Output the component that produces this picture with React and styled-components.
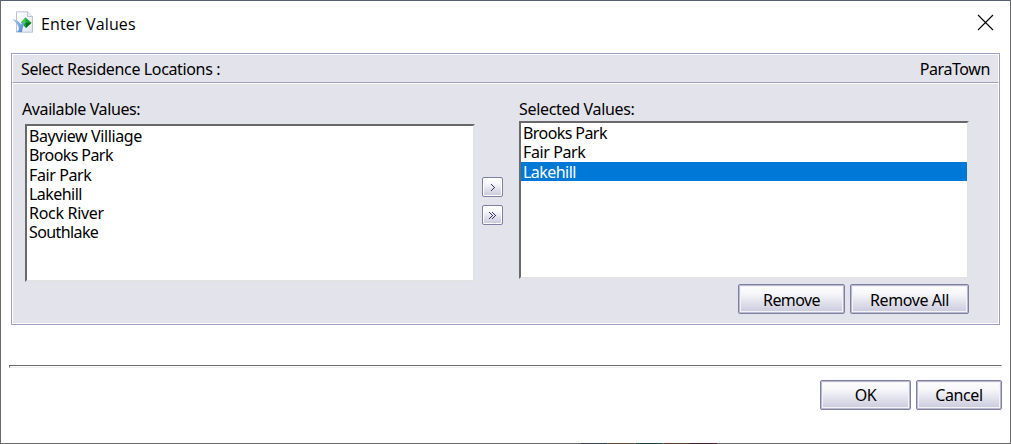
import React, { useState } from 'react';
import styled, { createGlobalStyle } from 'styled-components';

const Global = createGlobalStyle`
  * { box-sizing: border-box; }
  body { margin: 0; background: #fff; }
  button { margin: 0; padding: 0; }
`;

const Dialog = styled.div`
  width: 1011px;
  height: 444px;
  display: flex;
  flex-direction: column;
  border: 1px solid #696969;
  border-top-color: #596170;
  border-bottom: 0;
  background: #fff;
  color: #000;
  font: 16px/19px 'Noto Sans', sans-serif;
  overflow: hidden;
`;

const TitleBar = styled.header`
  height: 52px;
  flex: none;
  display: flex;
  align-items: flex-start;
  padding: 10px 16px 0 11px;
`;

const Title = styled.h1`
  flex: 1;
  margin: 2px 0 0 8px;
  font: 400 16px/22px 'Open Sans', sans-serif;
  letter-spacing: 0.15px;
`;

const CloseButton = styled.button`
  width: 17px;
  height: 17px;
  margin-top: 3px;
  border: 0;
  background: none;
  display: flex;
`;

const Label = styled.span`
  display: block;
  white-space: nowrap;
  letter-spacing: ${(p) => p.$track ?? -0.4}px;
`;

const Panel = styled.section`
  width: 989px;
  height: 272px;
  flex: none;
  margin-left: 10px;
  display: flex;
  flex-direction: column;
  border: 1px solid #9f9fbf;
  background: #e3e3eb;
`;

const PanelHeader = styled.div`
  height: 29px;
  flex: none;
  display: flex;
  justify-content: space-between;
  padding: 5px 8px 0 8px;
  border: 1px solid #fff;
  border-bottom: 1px solid #9f9fbf;
`;

const PanelBody = styled.div`
  flex: 1;
  display: flex;
  align-items: flex-start;
  border: 1px solid #fff;
`;

const Column = styled.div`
  width: ${(p) => p.$indent ? 453 : 450}px;
  margin-left: ${(p) => p.$left}px;
  padding-top: 16px;

  > ul { margin-left: ${(p) => p.$indent || 0}px; }
`;

const ListBox = styled.ul`
  height: 158px;
  margin: ${(p) => p.$gap}px 0 0;
  padding: 0.6px 0 0;
  list-style: none;
  background: #fff;
  border: 2px solid #e3e3e3;
  border-top-color: #696969;
  border-left-color: #696969;
`;

const Item = styled.li`
  height: 19.2px;
  padding: 0.7px 0 0 2px;
  line-height: 19.2px;
  color: ${(p) => (p.$selected ? '#fff' : '#000')};
  background: ${(p) => (p.$selected ? '#0078d7' : 'transparent')};
`;

const MoveButtons = styled.div`
  display: flex;
  flex-direction: column;
  gap: 8px;
  margin: 93px 0 0 7px;
`;

const Button = styled.button`
  width: ${(p) => p.$w}px;
  height: ${(p) => p.$h || 30}px;
  display: flex;
  align-items: center;
  justify-content: center;
  padding-top: ${(p) => p.$drop || 0}px;
  border: 1px solid #7f7f9f;
  border-radius: 2px;
  background: linear-gradient(#fff 0%, #f7f7fa 30%, #c8c8dc 100%);
  box-shadow: ${(p) => (p.$h ? 'inset 0 0 0 1px #fff' : 'inset 0 0 0 1px #b9b9cf, inset 0 0 0 2px #f4f4f8')};
  color: #000;
  font: inherit;
`;

const Actions = styled.div`
  display: flex;
  justify-content: flex-end;
  gap: 5px;
  margin-top: ${(p) => p.$top || 0}px;
  padding-right: ${(p) => p.$right || 0}px;
`;

const Divider = styled.hr`
  width: 993px;
  height: 3px;
  flex: none;
  margin: 40px 0 0 8px;
  border: 1px solid #eee;
  border-top-color: #696969;
  border-left-color: #696969;
`;

const BottomEdge = styled.div`
  height: 1px;
  flex: none;
  margin-top: auto;
  background: linear-gradient(
    90deg,
    #696969 580px, #33404a 580px 606px, #696969 606px 607px, #6b4a34 607px 633px,
    #696969 633px 635px, #10453a 635px 661px, #696969 661px 663px, #5c3322 663px 689px,
    #4a2233 690px 716px, #696969 716px
  );
`;

const FileIcon = () => (
  <svg width="21" height="23" viewBox="0 0 21 23">
    <defs>
      <linearGradient id="page" x2="1" y2="1">
        <stop stopColor="#fff" />
        <stop offset="1" stopColor="#dfe6f2" />
      </linearGradient>
      <linearGradient id="sweep" x2="1" y2="1">
        <stop stopColor="#a9cdf5" />
        <stop offset="1" stopColor="#4a7fd4" />
      </linearGradient>
    </defs>
    <path d="M4.500.800H15.500l5 4.700v15.700h-16z" fill="url(#page)" stroke="#bcc4d0" />
    <path d="M15.500.800v4.700h5" fill="#eef1f6" stroke="#bcc4d0" />
    <path d="M13.500 6.500l6 5.200-5.600 5.300-5-5.400z" fill="#16a52c" />
    <path d="M13.500 6.500v5.400h-4.600z" fill="#3fd054" />
    <path d="M13.900 17l5.600-5.300h-5.600z" fill="#087019" />
    <path d="M0 8.500c4-.300 7 1.500 9 5 1.300-1.300 2.500-2 4.500-2.200-2 2.500-3 5.500-3.500 9.700H4.500c2-1 2.800-2.500 2.300-4.500C5.800 13 3.500 10.500 0 8.500z" fill="url(#sweep)" />
  </svg>
);

const CloseIcon = () => (
  <svg width="17" height="17" viewBox="0 0 17 17">
    <path d="M1 1l15 15M16 1L1 16" stroke="#000" strokeWidth="1.1" />
  </svg>
);

const Chevron = ({ x }) => (
  <path d={`M${x} 0h1v1h1v1h1v1h1v1h-1v1h-1v1h-1v1h-1v-1h1v-1h1v-1h1v-1h-1v-1h-1v-1h-1z`} fill="#33335c" />
);

const Arrows = ({ double }) => (
  <svg width={double ? 8 : 4} height="7" viewBox={double ? '0 0 8 7' : '0 0 4 7'} shapeRendering="crispEdges">
    <Chevron x={0} />
    {double && <Chevron x={3} />}
  </svg>
);

const available = ['Bayview Villiage', 'Brooks Park', 'Fair Park', 'Lakehill', 'Rock River', 'Southlake'];
const chosen = ['Brooks Park', 'Fair Park', 'Lakehill'];
const tracking = { 'Brooks Park': -0.58, Lakehill: -0.55, 'Rock River': -0.3, Southlake: -0.6 };

export default function App() {
  const [selected, setSelected] = useState('Lakehill');
  return (
    <>
      <Global />
      <Dialog>
        <TitleBar>
          <FileIcon />
          <Title>Enter Values</Title>
          <CloseButton aria-label="Close"><CloseIcon /></CloseButton>
        </TitleBar>
        <Panel>
          <PanelHeader>
            <Label $track={-0.36}>Select Residence Locations :</Label>
            <Label>ParaTown</Label>
          </PanelHeader>
          <PanelBody>
            <Column $left={9} $indent={3}>
              <Label $track={-0.4}>Available Values:</Label>
              <ListBox $gap={5}>
                {available.map((v) => (
                  <Item key={v}><Label $track={tracking[v]}>{v}</Label></Item>
                ))}
              </ListBox>
            </Column>
            <MoveButtons>
              <Button $w={21} $h={20} aria-label="Add"><Arrows /></Button>
              <Button $w={21} $h={20} aria-label="Add all"><Arrows double /></Button>
            </MoveButtons>
            <Column $left={16}>
              <Label $track={-0.32}>Selected Values:</Label>
              <ListBox $gap={2}>
                {chosen.map((v) => (
                  <Item key={v} $selected={v === selected} onClick={() => setSelected(v)}>
                    <Label $track={tracking[v]}>{v}</Label>
                  </Item>
                ))}
              </ListBox>
              <Actions $top={5}>
                <Button $w={107} $drop={2}><Label $track={-0.6}>Remove</Label></Button>
                <Button $w={119} $drop={2}><Label>Remove All</Label></Button>
              </Actions>
            </Column>
          </PanelBody>
        </Panel>
        <Divider />
        <Actions $top={12} $right={8}>
          <Button $w={91}><Label>OK</Label></Button>
          <Button $w={86}><Label>Cancel</Label></Button>
        </Actions>
        <BottomEdge />
      </Dialog>
    </>
  );
}
